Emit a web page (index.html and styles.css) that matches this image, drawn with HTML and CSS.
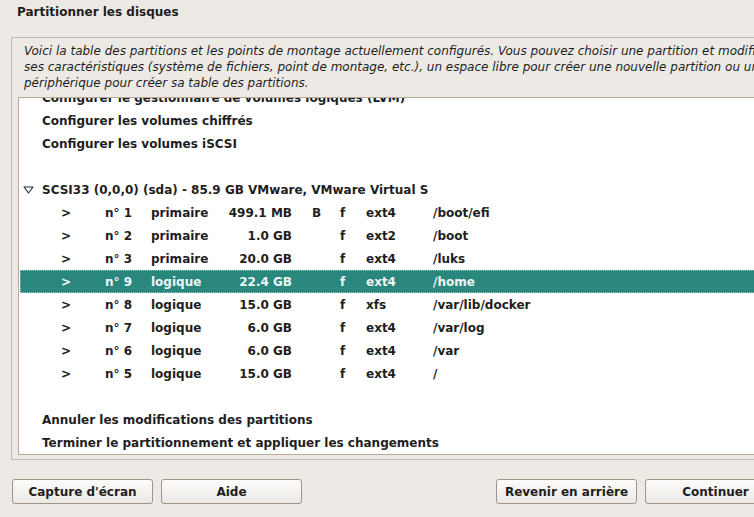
FILE: index.html
```html
<!DOCTYPE html>
<html lang="fr">
<head>
<meta charset="utf-8">
<title>Partitionner les disques</title>
<link rel="stylesheet" href="styles.css">
</head>
<body>
<div class="window">
  <h1 class="title">Partitionner les disques</h1>
  <div class="frame">
    <div class="desc">
      <span class="line">Voici la table des partitions et les points de montage actuellement configurés. Vous pouvez choisir une partition et modifier</span>
      <span class="line">ses caractéristiques (système de fichiers, point de montage, etc.), un espace libre pour créer une nouvelle partition ou un</span>
      <span class="line">périphérique pour créer sa table des partitions.</span>
    </div>
    <div class="list">
      <div class="rows">
        <div class="row item">Configurer le gestionnaire de volumes logiques (LVM)</div>
        <div class="row item">Configurer les volumes chiffrés</div>
        <div class="row item">Configurer les volumes iSCSI</div>
        <div class="row"></div>
        <div class="row disk"><svg class="tri" width="11" height="8" viewBox="0 0 11 8"><path d="M1 1 H10 L5.5 7 Z" fill="none" stroke="#2a2a2a" stroke-width="1.1" stroke-linejoin="round"/></svg>SCSI33 (0,0,0) (sda) - 85.9 GB VMware, VMware Virtual S</div>
        <div class="row part"><span class="c-chev">&gt;</span><span class="c-num">n° 1</span><span class="c-type">primaire</span><span class="c-size">499.1 MB</span><span class="c-boot">B</span><span class="c-f">f</span><span class="c-fs">ext4</span><span class="c-mnt">/boot/efi</span></div>
        <div class="row part"><span class="c-chev">&gt;</span><span class="c-num">n° 2</span><span class="c-type">primaire</span><span class="c-size">1.0 GB</span><span class="c-boot"></span><span class="c-f">f</span><span class="c-fs">ext2</span><span class="c-mnt">/boot</span></div>
        <div class="row part"><span class="c-chev">&gt;</span><span class="c-num">n° 3</span><span class="c-type">primaire</span><span class="c-size">20.0 GB</span><span class="c-boot"></span><span class="c-f">f</span><span class="c-fs">ext4</span><span class="c-mnt">/luks</span></div>
        <div class="row part selected"><span class="c-chev">&gt;</span><span class="c-num">n° 9</span><span class="c-type">logique</span><span class="c-size">22.4 GB</span><span class="c-boot"></span><span class="c-f">f</span><span class="c-fs">ext4</span><span class="c-mnt">/home</span></div>
        <div class="row part"><span class="c-chev">&gt;</span><span class="c-num">n° 8</span><span class="c-type">logique</span><span class="c-size">15.0 GB</span><span class="c-boot"></span><span class="c-f">f</span><span class="c-fs">xfs</span><span class="c-mnt">/var/lib/docker</span></div>
        <div class="row part"><span class="c-chev">&gt;</span><span class="c-num">n° 7</span><span class="c-type">logique</span><span class="c-size">6.0 GB</span><span class="c-boot"></span><span class="c-f">f</span><span class="c-fs">ext4</span><span class="c-mnt">/var/log</span></div>
        <div class="row part"><span class="c-chev">&gt;</span><span class="c-num">n° 6</span><span class="c-type">logique</span><span class="c-size">6.0 GB</span><span class="c-boot"></span><span class="c-f">f</span><span class="c-fs">ext4</span><span class="c-mnt">/var</span></div>
        <div class="row part"><span class="c-chev">&gt;</span><span class="c-num">n° 5</span><span class="c-type">logique</span><span class="c-size">15.0 GB</span><span class="c-boot"></span><span class="c-f">f</span><span class="c-fs">ext4</span><span class="c-mnt">/</span></div>
        <div class="row"></div>
        <div class="row item">Annuler les modifications des partitions</div>
        <div class="row item">Terminer le partitionnement et appliquer les changements</div>
      </div>
    </div>
  </div>
  <div class="buttons">
    <div class="group">
      <button class="btn">Capture d'écran</button>
      <button class="btn">Aide</button>
    </div>
    <div class="group">
      <button class="btn">Revenir en arrière</button>
      <button class="btn">Continuer</button>
    </div>
  </div>
</div>
</body>
</html>
```

FILE: styles.css
```css
html, body {
  margin: 0;
  padding: 0;
}
body {
  width: 754px;
  height: 517px;
  overflow: hidden;
  background: #edeae6;
  font-family: "DejaVu Sans", "Verdana", sans-serif;
  color: #1e1e1e;
}
.window {
  width: 798px;
}
.title {
  margin: 0 0 17px 0;
  padding: 4px 0 0 17px;
  font-size: 12px;
  line-height: 16px;
  font-weight: bold;
  height: 16px;
}
.frame {
  margin: 0 11px;
  border: 1px solid #c1b9b0;
  padding: 5px 0 4px 6px;
}
.desc {
  padding-left: 6px;
  font-style: italic;
  font-size: 12px;
  line-height: 16px;
  white-space: nowrap;
}
.desc .line {
  display: block;
}
.list {
  margin-top: 6px;
  height: 356px;
  border: 1px solid #b8a998;
  background: #ffffff;
  overflow: hidden;
}
.rows {
  margin: -12px 1px 0 1px;
}
.row {
  height: 23px;
  padding-top: 1px;
  line-height: 22px;
  font-size: 12px;
  font-weight: bold;
  white-space: nowrap;
  box-sizing: border-box;
}
.item {
  padding-left: 22px;
}
.disk {
  display: flex;
  align-items: center;
  padding-left: 3px;
}
.tri {
  display: block;
  margin-right: 8px;
  margin-top: 0;
}
.part {
  display: flex;
  padding-left: 41px;
}
.part span {
  display: block;
  flex: none;
}
.c-chev { width: 44px; }
.c-num { width: 46px; }
.c-type { width: 70px; }
.c-size { width: 71px; text-align: right; margin-right: 20px; }
.c-boot { width: 28px; }
.c-f { width: 26px; }
.c-fs { width: 67px; }
.selected {
  background: #2a877e;
  color: #eef5f4;
  outline: 1px dotted #8ec7bf;
  outline-offset: -1px;
}
.buttons {
  display: flex;
  justify-content: space-between;
  padding: 19px 12px 0 12px;
}
.group {
  display: flex;
  gap: 8px;
}
.btn {
  width: 141px;
  height: 25px;
  box-sizing: border-box;
  border: 1px solid #9d948a;
  border-radius: 3px;
  background: linear-gradient(#fdfcfb, #ebe8e4);
  font-family: "DejaVu Sans", "Verdana", sans-serif;
  font-size: 12px;
  font-weight: bold;
  color: #1e1e1e;
  padding: 1px 0 0 0;
  line-height: 22px;
}
```
